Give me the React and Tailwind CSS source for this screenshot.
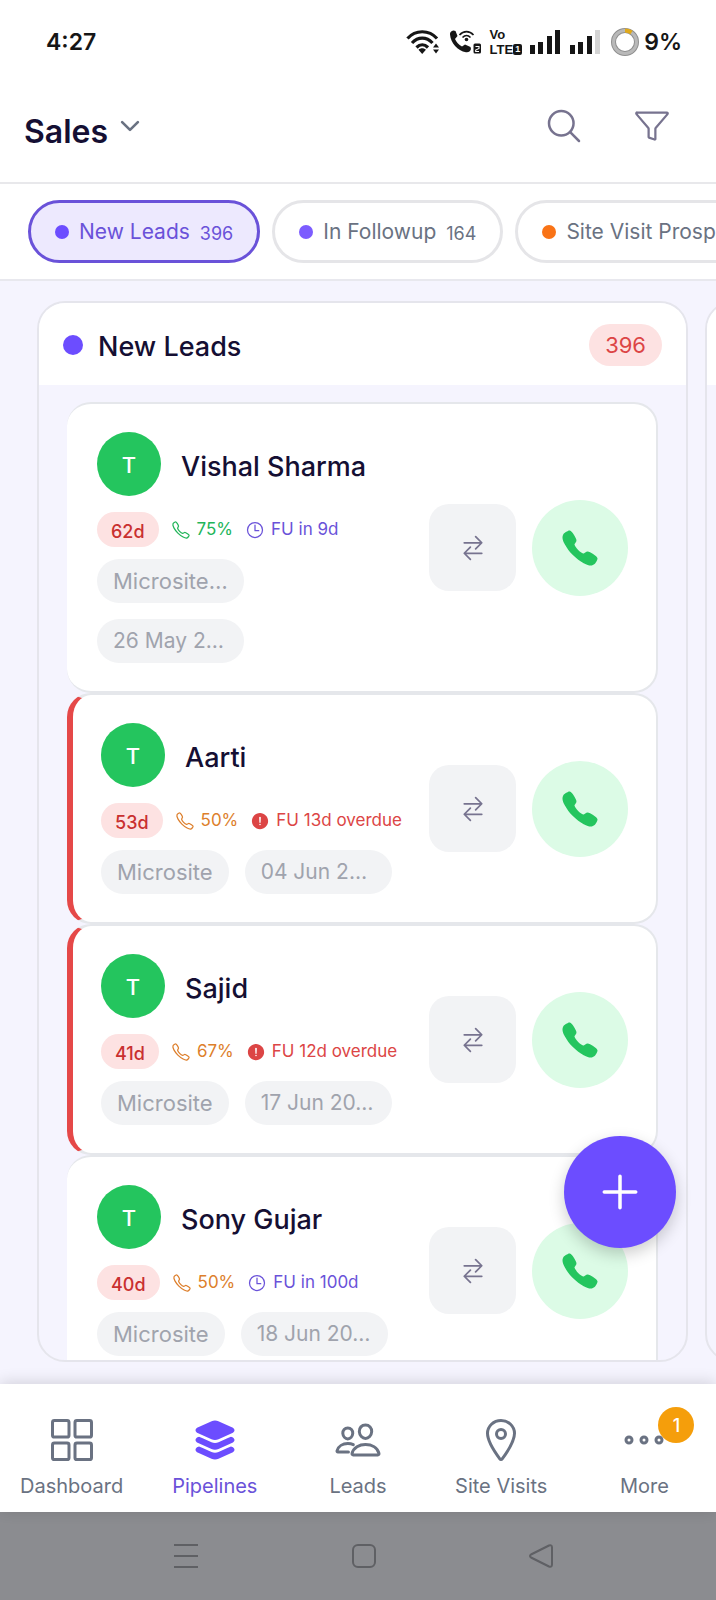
import {
  IoAdd,
  IoAlertCircle,
  IoCall,
  IoCallOutline,
  IoChevronDownOutline,
  IoEllipsisHorizontalOutline,
  IoFunnelOutline,
  IoGridOutline,
  IoLayers,
  IoLocationOutline,
  IoPeopleOutline,
  IoSearchOutline,
  IoSwapHorizontalOutline,
  IoTimeOutline,
} from "react-icons/io5";

const stages = [
  { name: "New Leads", count: 396, dot: "bg-[#6c4dff]", active: true },
  { name: "In Followup", count: 164, dot: "bg-[#7c5cff]" },
  { name: "Site Visit Prospect", dot: "bg-[#f97316]" },
];

const leads = [
  {
    name: "Vishal Sharma",
    age: "62d",
    score: "75%",
    scoreColor: "text-[#22b55a]",
    followUp: "FU in 9d",
    source: "Microsite…",
    date: "26 May 2…",
    stacked: true,
  },
  {
    name: "Aarti",
    age: "53d",
    score: "50%",
    scoreColor: "text-[#dd7f2c]",
    followUp: "FU 13d overdue",
    overdue: true,
    source: "Microsite",
    date: "04 Jun 2…",
  },
  {
    name: "Sajid",
    age: "41d",
    score: "67%",
    scoreColor: "text-[#dd7f2c]",
    followUp: "FU 12d overdue",
    overdue: true,
    source: "Microsite",
    date: "17 Jun 20…",
  },
  {
    name: "Sony Gujar",
    age: "40d",
    score: "50%",
    scoreColor: "text-[#dd7f2c]",
    followUp: "FU in 100d",
    source: "Microsite",
    date: "18 Jun 20…",
  },
];

const tabs = [
  { label: "Dashboard", icon: IoGridOutline },
  { label: "Pipelines", icon: IoLayers, active: true },
  { label: "Leads", icon: IoPeopleOutline },
  { label: "Site Visits", icon: IoLocationOutline },
  { label: "More", icon: IoEllipsisHorizontalOutline, badge: 1 },
];

function StatusBar() {
  return (
    <div className="flex h-[84px] shrink-0 items-center justify-between pl-[46px] pr-[34px] text-[#161616]">
      <span className="text-[23px] font-semibold">4:27</span>
      <div className="flex items-center">
        {/* wifi with traffic arrows */}
        <svg width="34" height="26" viewBox="0 0 34 26" fill="none" stroke="currentColor" strokeWidth="3.2">
          <path d="M1.5 9.5C9.5 0.5 23 0.5 31 9.5" />
          <path d="M6 14C12 7.5 20.500 7.5 26.500 14" />
          <path d="M10.500 18.500C14 15 18.500 15 22 18.500" />
          <path d="M16.200 25l-3.700-4.200c2-2 5.400-2 7.400 0z" fill="currentColor" stroke="none" />
          <path d="M27 18.500l3-4 3 4zM27 20.500l3 4 3-4z" fill="currentColor" stroke="none" />
        </svg>
        {/* wifi calling on sim 2 */}
        <svg className="ml-[9px]" width="33" height="26" viewBox="0 0 33 26" fill="none">
          <path
            d="M1 5.500C.8 3.500 2 2 4.500 1.500L6.500 2l2 5-2.500 3c1.500 3.500 3.500 5.500 7 7.500l3-2 5.500 2.500.5 2c-.8 2.700-2.500 3.500-5 3.200C8.500 22 1.800 14 1 5.500z"
            fill="currentColor"
          />
          <path d="M10.500 6c4-4.500 10-4.500 14 0M13.500 8.500c2.500-2.500 5.500-2.500 8 0" stroke="currentColor" strokeWidth="1.600" />
          <circle cx="17.500" cy="10.500" r="1.800" fill="currentColor" />
          <rect x="24.500" y="14.500" width="7.500" height="10" rx="1.500" fill="currentColor" />
          <path d="M26.500 17.500h3.500v2l-3.300 1.500v1.500H30" stroke="#fff" strokeWidth="1.100" />
        </svg>
        <div className="ml-2 flex flex-col font-['Liberation_Sans',sans-serif] text-[13px] leading-[15px] font-bold">
          <span>Vo</span>
          <span className="flex items-center">
            LTE
            <span className="rounded-[2px] bg-[#161616] px-0.5 text-[9px] leading-[11px] text-white">1</span>
          </span>
        </div>
        <svg className="ml-[8px]" width="30" height="24" fill="currentColor">
          <rect y="15" width="5" height="9" />
          <rect x="8" y="12" width="5" height="12" />
          <rect x="17" y="6" width="5" height="18" />
          <rect x="25" width="5" height="24" />
        </svg>
        <svg className="ml-[10px]" width="30" height="24" fill="currentColor">
          <rect y="15" width="5" height="9" />
          <rect x="8" y="12" width="5" height="12" />
          <rect x="17" y="6" width="5" height="18" />
          <rect x="25" width="5" height="24" fill="#d4d4d4" />
        </svg>
        <svg className="ml-[11px]" width="28" height="28" viewBox="0 0 28 28" fill="none">
          <circle cx="14" cy="14" r="11.500" stroke="#8f8f8f" strokeWidth="5" />
          <circle cx="14" cy="14" r="11.500" stroke="#b9b9b9" strokeWidth="3" />
          <path d="M14 2.500a11.500 11.500 0 0 1 6.500 2" stroke="#e0a91b" strokeWidth="4" />
        </svg>
        <span className="ml-[5px] text-[23px] font-semibold">9%</span>
      </div>
    </div>
  );
}

function Header() {
  return (
    <header className="flex h-[100px] shrink-0 items-start justify-between border-b-2 border-[#e8e8eb] pt-[22px] pr-[46px] pl-6">
      <button className="flex items-start gap-2 pt-1.5 text-[#150f33]">
        <span className="text-[32px] leading-10 font-semibold">Sales</span>
        <IoChevronDownOutline className="size-7 text-gray-500" />
      </button>
      <div className="flex h-10 items-center gap-[50px] text-[#77738f]">
        <button aria-label="Search">
          <IoSearchOutline className="size-10" />
        </button>
        <button aria-label="Filter">
          <IoFunnelOutline className="size-9" />
        </button>
      </div>
    </header>
  );
}

function StageChips() {
  return (
    <div className="flex h-[97px] shrink-0 items-center gap-3 overflow-hidden border-b-2 border-[#e8e8ee] pl-7">
      {stages.map((stage) => (
        <button
          key={stage.name}
          className={`flex h-[63px] shrink-0 items-center rounded-full border-[3px] px-6 text-[21px] ${
            stage.active
              ? "border-[#6a52d9] bg-[#ede9fe] text-[#6a52d9]"
              : "border-[#e5e5e8] bg-white text-gray-500"
          }`}
        >
          <span className={`mr-2.5 size-3.5 rounded-full ${stage.dot}`} />
          {stage.name}
          {stage.count && <span className="ml-2.5 pt-1 text-lg">{stage.count}</span>}
        </button>
      ))}
    </div>
  );
}

function LeadCard({ lead }) {
  return (
    <article
      className={`flex items-center justify-between rounded-3xl border-y-2 border-r-2 border-y-[#e5e7eb] border-r-[#e5e7eb] bg-white py-7 pr-7 ${
        lead.overdue ? "border-l-[6px] border-l-[#e54848] pl-7" : "pl-[30px]"
      }`}
    >
      <div className="min-w-0">
        <div className="flex items-center gap-5">
          <span className="flex size-16 items-center justify-center rounded-full bg-[#24c55e] pt-0.5 text-[22px] font-medium text-white">
            T
          </span>
          <h3 className="pt-1.5 text-[27px] leading-8 font-medium text-[#150f33]">{lead.name}</h3>
        </div>

        <div className="mt-4 flex h-[35px] items-center text-[17px]">
          <span className="flex h-full items-center rounded-full bg-[#fde2e2] px-3.5 pt-1 text-lg font-medium text-[#c93030]">
            {lead.age}
          </span>
          <span className={`ml-3 flex items-center gap-1.5 ${lead.scoreColor}`}>
            <IoCallOutline className="size-5" />
            {lead.score}
          </span>
          <span
            className={`ml-3 flex items-center gap-1.5 whitespace-nowrap ${
              lead.overdue ? "text-[#dc4545]" : "text-[#6a52d9]"
            }`}
          >
            {lead.overdue ? <IoAlertCircle className="size-5" /> : <IoTimeOutline className="size-5" />}
            {lead.followUp}
          </span>
        </div>

        <div className={`mt-3 flex gap-4 text-[#a0a3ad] ${lead.stacked ? "flex-col" : ""}`}>
          <span
            className={`flex h-11 items-center rounded-full bg-[#f2f3f5] px-4 text-[22px] ${
              lead.stacked ? "w-[147px]" : ""
            }`}
          >
            {lead.source}
          </span>
          <span className="flex h-11 w-[147px] items-center rounded-full bg-[#f2f3f5] px-4 text-[21px] whitespace-nowrap">
            {lead.date}
          </span>
        </div>
      </div>

      <div className="flex shrink-0 items-center gap-4">
        <button
          aria-label={`Move ${lead.name}`}
          className="flex size-[87px] items-center justify-center rounded-[20px] bg-[#f2f3f5] text-[#77738f]"
        >
          <IoSwapHorizontalOutline className="size-7" />
        </button>
        <button
          aria-label={`Call ${lead.name}`}
          className="flex size-24 items-center justify-center rounded-full bg-[#dcfbe6] text-[#24c55e]"
        >
          <IoCall className="size-10" />
        </button>
      </div>
    </article>
  );
}

function Column({ children }) {
  return (
    <section className="flex w-[calc(100%-28px)] shrink-0 flex-col overflow-hidden rounded-[28px] border-2 border-[#e5e5ec]">
      {children}
    </section>
  );
}

function Board() {
  return (
    <main className="relative min-h-0 flex-1 bg-[#f5f4fe]">
      <div className="flex h-full gap-[17px] overflow-hidden pt-5 pb-[22px] pl-[37px]">
        <Column>
          <div className="flex h-[82px] shrink-0 items-center justify-between bg-white px-6 pt-0.5">
            <div className="flex items-center gap-[15px]">
              <span className="size-5 rounded-full bg-[#6c4dff]" />
              <h2 className="pt-1 text-[27px] leading-9 font-medium text-[#150f33]">New Leads</h2>
            </div>
            <span className="flex h-[42px] items-center rounded-full bg-[#fde2e2] px-4 text-[22px] text-[#dc4545]">
              396
            </span>
          </div>
          <div className="flex flex-col px-7 pt-[17px]">
            {leads.map((lead) => (
              <LeadCard key={lead.name} lead={lead} />
            ))}
          </div>
        </Column>
        <Column>
          <div className="h-[82px] shrink-0 bg-white" />
        </Column>
      </div>

      <button
        aria-label="Add lead"
        className="absolute right-10 bottom-[136px] flex size-28 items-center justify-center rounded-full bg-[#6c4dff] text-white shadow-[0_6px_16px_rgba(0,0,0,0.2)]"
      >
        <IoAdd className="size-14" />
      </button>
    </main>
  );
}

function TabBar() {
  return (
    <nav className="relative flex h-32 shrink-0 bg-white pt-8 shadow-[0_-2px_14px_rgba(0,0,0,0.14)]">
      {tabs.map(({ label, icon: Icon, active, badge }) => (
        <a
          key={label}
          href="#"
          className={`flex flex-1 flex-col items-center gap-2 text-[20px] leading-7 ${
            active ? "text-[#6a52d9]" : "text-gray-500"
          }`}
        >
          <span className="relative">
            <Icon className={`size-12 ${active ? "text-[#6c4dff]" : ""}`} />
            {badge && (
              <span className="absolute -top-[9px] -right-[26px] flex size-9 items-center justify-center rounded-full bg-[#f59e0b] pt-0.5 text-lg font-medium text-white">
                {badge}
              </span>
            )}
          </span>
          {label}
        </a>
      ))}
    </nav>
  );
}

function SystemBar() {
  return (
    <div className="flex h-[88px] shrink-0 items-center justify-between bg-[#8b8c90] pr-[162px] pl-[173px] text-[#5f6064]">
      <button aria-label="Recent apps">
        <svg width="26" height="26" fill="none" stroke="currentColor" strokeWidth="2">
          <path d="M1 2h24M1 13h24M1 24h24" />
        </svg>
      </button>
      <button aria-label="Home">
        <svg width="26" height="26" fill="none" stroke="currentColor" strokeWidth="2">
          <rect x="2" y="2" width="22" height="22" rx="5" />
        </svg>
      </button>
      <button aria-label="Back">
        <svg width="26" height="26" fill="none" stroke="currentColor" strokeWidth="2" strokeLinejoin="round">
          <path d="M3 11.500L21 2.500Q24 1.500 24 4.500V21.500Q24 24.500 21 23.500L3 14.500Q1 13 3 11.500z" />
        </svg>
      </button>
    </div>
  );
}

export default function App() {
  return (
    <div className="flex h-screen flex-col bg-white font-['Inter','Liberation_Sans',sans-serif]">
      <StatusBar />
      <Header />
      <StageChips />
      <Board />
      <TabBar />
      <SystemBar />
    </div>
  );
}
